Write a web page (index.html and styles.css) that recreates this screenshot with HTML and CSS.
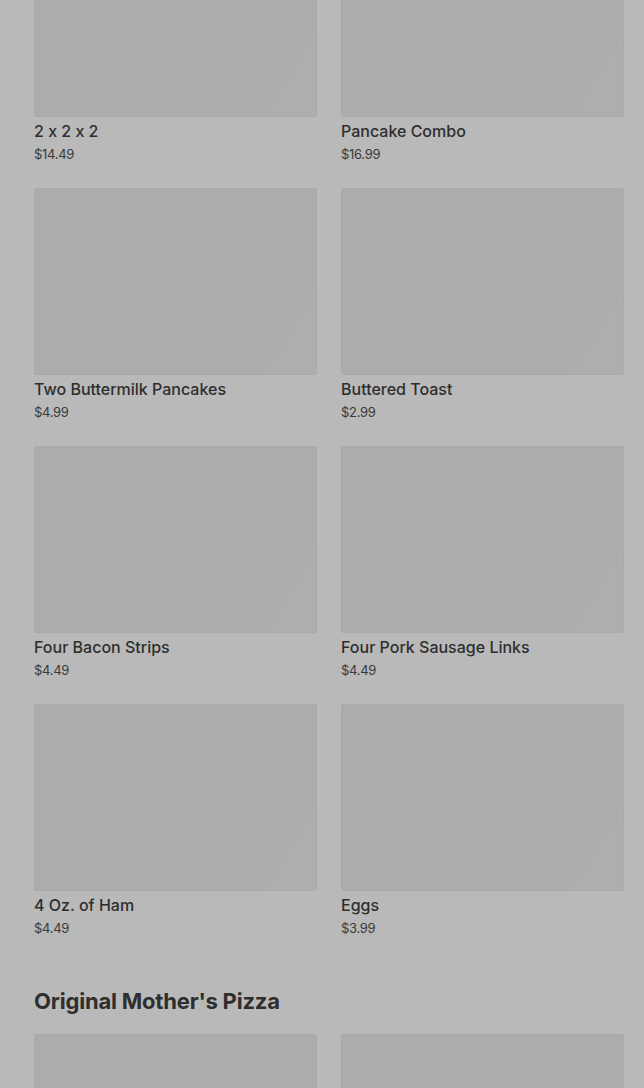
FILE: index.html
```html
<!DOCTYPE html>
<html lang="en">
<head>
    <meta charset="UTF-8">
    <meta name="viewport" content="width=device-width, initial-scale=1.0">
    <title>Menu</title>
    <link rel="stylesheet" href="styles.css">
</head>
<body>
    <!-- Breakfast section (scrolled) -->
    <div class="menu">
        <div class="grid first">
            <div class="item">
                <div class="photo"></div>
                <p class="name">2 x 2 x 2</p>
                <p class="price">$14.49</p>
            </div>
            <div class="item">
                <div class="photo"></div>
                <p class="name">Pancake Combo</p>
                <p class="price">$16.99</p>
            </div>
            <div class="item">
                <div class="photo"></div>
                <p class="name">Two Buttermilk Pancakes</p>
                <p class="price">$4.99</p>
            </div>
            <div class="item">
                <div class="photo"></div>
                <p class="name">Buttered Toast</p>
                <p class="price">$2.99</p>
            </div>
            <div class="item">
                <div class="photo"></div>
                <p class="name">Four Bacon Strips</p>
                <p class="price">$4.49</p>
            </div>
            <div class="item">
                <div class="photo"></div>
                <p class="name">Four Pork Sausage Links</p>
                <p class="price">$4.49</p>
            </div>
            <div class="item">
                <div class="photo"></div>
                <p class="name">4 Oz. of Ham</p>
                <p class="price">$4.49</p>
            </div>
            <div class="item">
                <div class="photo"></div>
                <p class="name">Eggs</p>
                <p class="price">$3.99</p>
            </div>
        </div>

        <!-- Pizza section -->
        <h2 class="section-title">Original Mother's Pizza</h2>
        <div class="grid">
            <div class="item">
                <div class="photo"></div>
            </div>
            <div class="item">
                <div class="photo"></div>
            </div>
        </div>
    </div>
</body>
</html>
```

FILE: styles.css
```css
/* Page dimmed behind an overlay */
body {
    margin: 0;
    background-color: #b9b9b9;
    font-family: 'Inter', 'Liberation Sans', Arial, sans-serif;
    font-feature-settings: "calt" 0;
    overflow: hidden;
}

.menu {
    padding: 0 20px 0 34px;
}

.grid {
    display: grid;
    grid-template-columns: 1fr 1fr;
    column-gap: 24px;
    row-gap: 25px;
}

/* first row is scrolled partly out of view */
.grid.first {
    margin-top: -70px;
}

.photo {
    height: 185px;
    border: 1px solid #aaaaaa;
    border-radius: 2px;
    background: linear-gradient(121deg, #acacac 86%, #aeaeae 88%);
}

.name {
    margin: 4px 0 0 0;
    font-size: 16px;
    line-height: 20px;
    font-weight: 500;
    color: #2e2e2e;
}

.price {
    margin: 4px 0 0 0;
    font-size: 13px;
    line-height: 18px;
    color: #3a3a3a;
    letter-spacing: -0.3px;
}

.section-title {
    margin: 50px 0 19px 0;
    font-size: 22px;
    line-height: 28px;
    font-weight: 700;
    color: #2e2e2e;
    letter-spacing: -0.2px;
}
```
